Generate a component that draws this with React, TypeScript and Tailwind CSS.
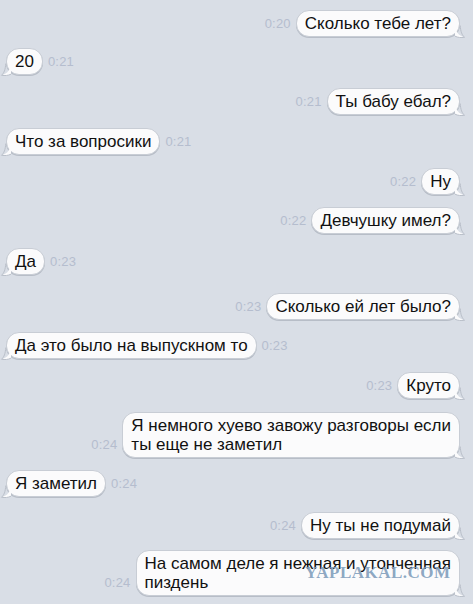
import React from 'react';

type Msg = {
  out: boolean;
  text: React.ReactNode;
  time: string;
  mt: string;
};

const messages: Msg[] = [
  { out: true, text: 'Сколько тебе лет?', time: '0:20', mt: 'mt-[10px]' },
  { out: false, text: '20', time: '0:21', mt: 'mt-[11px]' },
  { out: true, text: 'Ты бабу ебал?', time: '0:21', mt: 'mt-[13px]' },
  { out: false, text: 'Что за вопросики', time: '0:21', mt: 'mt-[13px]' },
  { out: true, text: 'Ну', time: '0:22', mt: 'mt-[13px]' },
  { out: true, text: 'Девчушку имел?', time: '0:22', mt: 'mt-[12px]' },
  { out: false, text: 'Да', time: '0:23', mt: 'mt-[14px]' },
  { out: true, text: 'Сколько ей лет было?', time: '0:23', mt: 'mt-[18px]' },
  { out: false, text: 'Да это было на выпускном то', time: '0:23', mt: 'mt-[12px]' },
  { out: true, text: 'Круто', time: '0:23', mt: 'mt-[13px]' },
  {
    out: true,
    text: (
      <>
        Я немного хуево завожу разговоры если
        <br />
        ты еще не заметил
      </>
    ),
    time: '0:24',
    mt: 'mt-[13px]',
  },
  { out: false, text: 'Я заметил', time: '0:24', mt: 'mt-[12px]' },
  { out: true, text: 'Ну ты не подумай', time: '0:24', mt: 'mt-[15px]' },
  {
    out: true,
    text: (
      <>
        На самом деле я нежная и утонченная
        <br />
        пиздень
      </>
    ),
    time: '0:24',
    mt: 'mt-[11px]',
  },
];

// little curled tail under the bubble corner
const Tail = ({ out }: { out: boolean }) => (
  <svg
    width="11"
    height="13"
    viewBox="0 0 11 13"
    className={
      out
        ? 'absolute right-[-6px] bottom-[-1px] z-20'
        : 'absolute left-[-6px] bottom-[-1px] z-20 -scale-x-100'
    }
  >
    <path d="M0 0 C1 7 3 10.5 9.5 12.3 C6 12.8 3 12.6 0 11.2 Z" fill="#fbfbfc" />
    <path
      d="M5.2 0.5 C5.6 6.5 7 10.2 9.5 12.3 C6 12.8 3 12.6 0 11.2"
      fill="none"
      stroke="#b9bfc9"
      strokeWidth="1"
    />
  </svg>
);

const Time = ({ t }: { t: string }) => (
  <span className="mb-[6px] text-[13px] leading-[15px] tracking-[0.2px] text-[#b5bdce]">{t}</span>
);

const Bubble = ({ m }: { m: Msg }) => (
  <div className="relative">
    <div className="relative z-10 rounded-[13px] border border-[#c8cdd5] bg-[#fbfbfc] px-[8px] py-[3px] text-[17px] leading-[19px] text-[#111] shadow-[0_1px_0_#b7bdc7]">
      {m.text}
    </div>
    <Tail out={m.out} />
  </div>
);

export default function App() {
  return (
    <div
      className="relative h-[604px] w-[473px] overflow-hidden bg-[#d9dee6]"
      style={{ fontFamily: '"Liberation Sans", Arial, sans-serif' }}
    >
      <div className="flex flex-col">
        {messages.map((m, i) =>
          m.out ? (
            <div key={i} className={`flex items-end justify-end gap-[5px] pr-[13px] ${m.mt}`}>
              <Time t={m.time} />
              <Bubble m={m} />
            </div>
          ) : (
            <div key={i} className={`flex items-end justify-start gap-[5px] pl-[6px] ${m.mt}`}>
              <Bubble m={m} />
              <Time t={m.time} />
            </div>
          )
        )}
      </div>
      <div
        className="absolute left-[305px] top-[564px] z-30 text-[17px] font-bold leading-[18px] tracking-[0.5px] text-[#7f9dbb]/90"
        style={{ fontFamily: '"Liberation Serif", "Times New Roman", serif' }}
      >
        YAPLAKAL.COM
      </div>
    </div>
  );
}
